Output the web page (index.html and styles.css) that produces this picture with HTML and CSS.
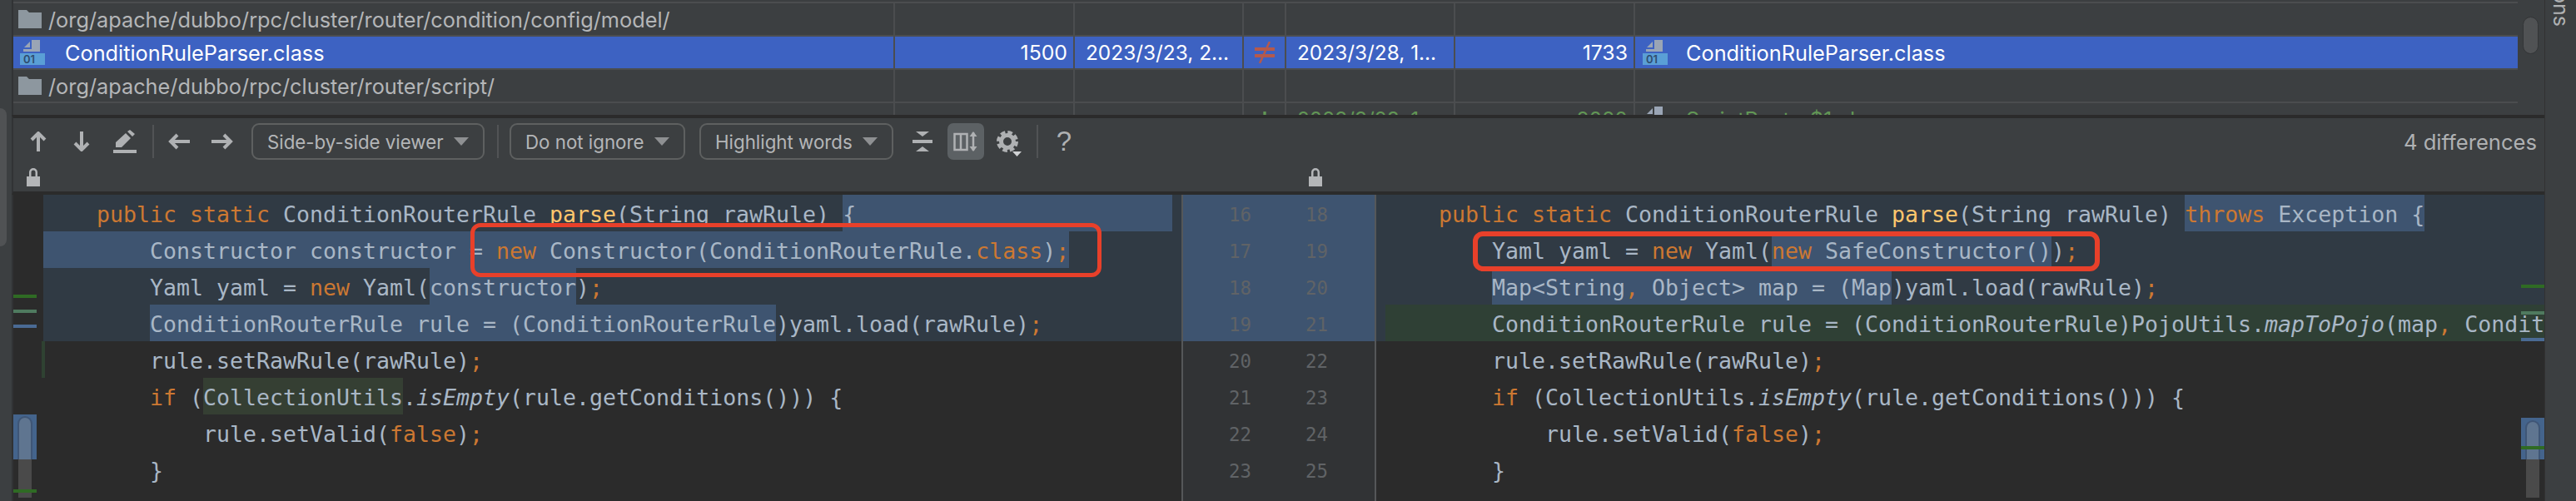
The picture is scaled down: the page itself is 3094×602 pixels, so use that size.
FILE: index.html
```html
<!DOCTYPE html>
<html lang="en">
<head>
<meta charset="utf-8">
<title>Diff</title>
<link rel="stylesheet" href="styles.css">
</head>
<body>
<div class="sidegrip"></div>
<div class="app">
  <div class="main">
    <div class="table">
      <div class="rows">
        <div class="tr sliver"></div>
        <div class="tr">
          <div class="td name"><svg class="ic-folder" viewBox="0 0 28 22"><path d="M0 0h10l3 3h15v19H0z"/></svg><span>/org/apache/dubbo/rpc/cluster/router/condition/config/model/</span></div>
          <div class="td"></div><div class="td"></div><div class="td"></div><div class="td"></div><div class="td"></div><div class="td"></div>
        </div>
        <div class="tr selected">
          <div class="td name file"><svg class="ic-cls" viewBox="0 0 30 30"><path class="page" d="M14 0h10v14H4v-3h10z"/><path class="page" d="M5 9l7-7v7z"/><rect class="badge" y="16" width="30" height="14"/><text class="bits" x="4" y="28">01</text></svg><span>ConditionRuleParser.class</span></div>
          <div class="td num">1500</div>
          <div class="td date">2023/3/23, 2...</div>
          <div class="td status"><svg class="ic-ne" viewBox="0 0 26 26"><path d="M1 7h24v4H1zM1 15h24v4H1z"/><path class="slash" d="M19 0L7 26"/></svg></div>
          <div class="td date">2023/3/28, 1...</div>
          <div class="td num">1733</div>
          <div class="td name file"><svg class="ic-cls" viewBox="0 0 30 30"><path class="page" d="M14 0h10v14H4v-3h10z"/><path class="page" d="M5 9l7-7v7z"/><rect class="badge" y="16" width="30" height="14"/><text class="bits" x="4" y="28">01</text></svg><span>ConditionRuleParser.class</span></div>
        </div>
        <div class="tr">
          <div class="td name"><svg class="ic-folder" viewBox="0 0 28 22"><path d="M0 0h10l3 3h15v19H0z"/></svg><span>/org/apache/dubbo/rpc/cluster/router/script/</span></div>
          <div class="td"></div><div class="td"></div><div class="td"></div><div class="td"></div><div class="td"></div><div class="td"></div>
        </div>
        <div class="tr added">
          <div class="td"></div><div class="td"></div><div class="td"></div>
          <div class="td status"><svg class="ic-plus" viewBox="0 0 20 20"><path d="M8.500 0h3v8.500H20v3h-8.500V20h-3v-8.500H0v-3h8.500z"/></svg></div>
          <div class="td date">2023/3/28, 1...</div>
          <div class="td num">2020</div>
          <div class="td name file"><svg class="ic-cls grey" viewBox="0 0 30 30"><path class="page" d="M14 0h10v14H4v-3h10z"/><path class="page" d="M5 9l7-7v7z"/></svg><span>ScriptRouter$1.class</span></div>
        </div>
      </div>
      <div class="vscroll"><div class="vthumb"></div></div>
    </div>

    <div class="toolbar">
      <div class="tools">
        <div class="tb"><svg class="ic" width="20" height="24" viewBox="0 0 20 24"><path d="M10 24V2M2 10l8-8 8 8"/></svg></div>
        <div class="tb"><svg class="ic" width="20" height="24" viewBox="0 0 20 24"><path d="M10 0v22M2 14l8 8 8-8"/></svg></div>
        <div class="tb"><svg class="ic-fill" width="30" height="28" viewBox="0 0 30 28"><path d="M4 21v-6L16 4l6 6-11 11zM18 2l3-2 6 5-3 3z"/><rect x="1" y="24" width="28" height="4"/></svg></div>
        <div class="sep first"></div>
        <div class="tb"><svg class="ic" width="26" height="20" viewBox="0 0 26 20"><path d="M26 10H3M11 2l-8 8 8 8"/></svg></div>
        <div class="tb"><svg class="ic" width="26" height="20" viewBox="0 0 26 20"><path d="M0 10h23M15 2l8 8-8 8"/></svg></div>
        <div class="dd viewer"><span>Side-by-side viewer</span><i class="tri"></i></div>
        <div class="sep second"></div>
        <div class="dd ignore"><span>Do not ignore</span><i class="tri"></i></div>
        <div class="dd words"><span>Highlight words</span><i class="tri"></i></div>
        <div class="btn collapse"><svg class="ic-fill" width="24" height="24" viewBox="0 0 24 24"><path d="M4 0h16l-8 6zM12 18l8 6H4z"/><rect y="10" width="24" height="4"/></svg></div>
        <div class="btn active"><svg class="ic-thin" width="30" height="28" viewBox="0 0 30 28"><path d="M1.500 5h15v19h-15zM9 5v19M24 3v22"/><path class="ic-head" d="M19.500 8L24 2l4.500 6zM19.500 20L24 26l4.500-6z"/></svg></div>
        <div class="btn gear"><svg class="ic-gear" width="30" height="32" viewBox="0 0 30 32"><circle class="ring" cx="13" cy="13" r="7.500"/><circle class="teeth" cx="13" cy="13" r="11"/><path class="caret" d="M19 25h11l-5.500 6z"/></svg></div>
        <div class="sep third"></div>
        <div class="btn help">?</div>
        <div class="count">4 differences</div>
      </div>
      <div class="locks">
        <svg class="lock" viewBox="0 0 16 22"><path d="M0 10h16v12H0zM3 10V5a5 5 0 0110 0v5h-2.500V5a2.500 2.500 0 00-5 0v5z"/></svg>
        <svg class="lock" viewBox="0 0 16 22"><path d="M0 10h16v12H0zM3 10V5a5 5 0 0110 0v5h-2.500V5a2.500 2.500 0 00-5 0v5z"/></svg>
      </div>
    </div>

    <div class="editor">
      <div class="pane left">
        <div class="line changed"><div class="code">    <b>public static</b> ConditionRouterRule <em>parse</em>(String rawRule) <span class="hl fill">{</span></div></div>
        <div class="line changed"><div class="code"><span class="hl">        Constructor constructor = <b>new</b> Constructor(ConditionRouterRule.<b>class</b>)<b>;</b></span></div></div>
        <div class="line changed"><div class="code">        Yaml yaml = <b>new</b> Yaml(<span class="hl">constructor</span>)<b>;</b></div></div>
        <div class="line changed"><div class="code">        <span class="hl">ConditionRouterRule rule = (ConditionRouterRule</span>)yaml.load(rawRule)<b>;</b></div></div>
        <div class="line"><div class="code">        rule.setRawRule(rawRule)<b>;</b></div></div>
        <div class="line"><div class="code">        <b>if</b> (<span class="usage">CollectionUtils</span>.<i>isEmpty</i>(rule.getConditions())) {</div></div>
        <div class="line"><div class="code">            rule.setValid(<b>false</b>)<b>;</b></div></div>
        <div class="line"><div class="code">        }</div></div>
        <div class="vbar"></div>
        <div class="mk green m1"></div><div class="mk sage m2"></div><div class="mk blue m3"></div>
        <div class="mk view m4"></div><div class="track t1"></div><div class="thumb t1"></div><div class="mk green m5"></div>
        <div class="callout c1"></div>
      </div>

      <div class="gutter">
        <div class="gl on"><span>16</span><span>18</span></div>
        <div class="gl on"><span>17</span><span>19</span></div>
        <div class="gl on"><span>18</span><span>20</span></div>
        <div class="gl on"><span>19</span><span>21</span></div>
        <div class="gl"><span>20</span><span>22</span></div>
        <div class="gl"><span>21</span><span>23</span></div>
        <div class="gl"><span>22</span><span>24</span></div>
        <div class="gl"><span>23</span><span>25</span></div>
      </div>

      <div class="pane right">
        <div class="line changed"><div class="code">    <b>public static</b> ConditionRouterRule <em>parse</em>(String rawRule) <span class="hl"><b>throws</b> Exception {</span></div></div>
        <div class="line changed"><div class="code">        Yaml yaml = <b>new</b> Yaml(<span class="hl"><b>new</b> SafeConstructor()</span>)<b>;</b></div></div>
        <div class="line changed"><div class="code">        <span class="hl">Map&lt;String<b>,</b> Object&gt; map = (Map</span>)yaml.load(rawRule)<b>;</b></div></div>
        <div class="line changed"><div class="code ins">        ConditionRouterRule rule = (ConditionRouterRule)PojoUtils.<i>mapToPojo</i>(map<b>,</b> ConditionRouterRule.<b>class</b>)<b>;</b></div></div>
        <div class="line"><div class="code">        rule.setRawRule(rawRule)<b>;</b></div></div>
        <div class="line"><div class="code">        <b>if</b> (CollectionUtils.<i>isEmpty</i>(rule.getConditions())) {</div></div>
        <div class="line"><div class="code">            rule.setValid(<b>false</b>)<b>;</b></div></div>
        <div class="line"><div class="code">        }</div></div>
        <div class="mk green n1"></div><div class="mk sage n2"></div><div class="mk blue n3"></div>
        <div class="mk view n4"></div><div class="track t2"></div><div class="thumb t2"></div><div class="mk green n5"></div>
        <div class="callout c2"></div>
      </div>
    </div>
  </div>
  <div class="strip"><div class="vtext"><span>ons</span></div></div>
</div>
</body>
</html>
```
FILE: styles.css
```css
* { box-sizing: border-box; }
html, body { margin: 0; padding: 0; width: 3094px; height: 602px; overflow: hidden; background: #3c3f41; }
.sidegrip { position: absolute; left: 0; top: 130px; width: 8px; height: 166px; background: #505254; border-radius: 0 8px 8px 0; }
.app { display: flex; width: 3094px; height: 602px; font-family: Inter, "Liberation Sans", sans-serif; }
.main { width: 3056px; height: 602px; padding-left: 14px; display: flex; flex-direction: column; }
.main > * { border-left: 2px solid #313335; }

/* file table */
.table { height: 138px; display: flex; overflow: hidden; flex: none; background: #3c3f41; }
.rows { width: 3008px; }
.tr { display: grid; grid-template-columns: 1057px 216px 203px 51px 203px 216px 1062px; height: 40px; border-bottom: 2px solid #4b4d4f; color: #b4b6b8; font-size: 25.300px; }
.tr.sliver { height: 4px; }
.td { display: flex; align-items: center; height: 38px; border-left: 2px solid #4b4d4f; white-space: nowrap; overflow: hidden; }
.td:first-child { border-left: 0; }
.name { padding-left: 6px; }
.name.file { padding-left: 8px; }
.td:last-child.name { padding-left: 9px; }
.ic-folder { width: 28px; height: 22px; margin-right: 8px; fill: #8d979f; flex: none; }
.ic-cls { width: 30px; height: 30px; margin-right: 24px; flex: none; }
.td:last-child .ic-cls { margin-right: 22px; }
.page { fill: #9aa5b5; }
.badge { fill: #5a9fd6; }
.bits { fill: #2f4d6e; font: 600 13px Inter, sans-serif; }
.num { justify-content: flex-end; padding-right: 7px; font-size: 24.800px; }
.date { padding-left: 13px; font-size: 24.400px; }
.status { justify-content: center; }
.ic-ne { width: 26px; height: 26px; fill: #b5594c; }
.slash { stroke: #b5594c; stroke-width: 2.500; fill: none; }
.ic-plus { width: 22px; height: 22px; margin-top: 4px; fill: #629755; }
.selected { color: #fff; background: #3d62c2; }
.added { color: #629755; }
.vscroll { width: 32px; position: relative; }
.vthumb { position: absolute; left: 6px; top: 20px; width: 19px; height: 45px; background: #505254; border: 1px solid #333537; border-radius: 10px; }

/* toolbar */
.toolbar { height: 96px; flex: none; border-top: 4px solid #2b2b2b; border-bottom: 4px solid #2b2b2b; color: #b4b6b8; position: relative; }
.tools { display: flex; align-items: stretch; height: 44px; margin-top: 6px; padding-left: 4px; }
.tb { width: 52px; display: flex; align-items: center; justify-content: center; }
.btn { width: 44px; display: flex; align-items: center; justify-content: center; border-radius: 7px; }
.ic { fill: none; stroke: #afb1b3; stroke-width: 4; }
.ic-fill { fill: #afb1b3; }
.ic-thin { fill: none; stroke: #afb1b3; stroke-width: 2.500; }
.ic-head { fill: #afb1b3; stroke: none; }
.ic-gear { margin-top: 6px; }
.ring { fill: none; stroke: #afb1b3; stroke-width: 5; }
.teeth { fill: none; stroke: #afb1b3; stroke-width: 4; stroke-dasharray: 5.640 3; }
.caret { fill: #d0d2d4; }
.sep { width: 2px; height: 40px; align-self: center; background: #515355; }
.sep.first { margin: 0 4px 0 7px; }
.sep.second { margin: 0 13px 0 15px; }
.sep.third { margin-left: 11px; }
.dd { display: flex; align-items: center; justify-content: space-between; padding: 0 17px; border: 2px solid #5e6060; border-radius: 9px; font-size: 22.300px; white-space: nowrap; }
.viewer { width: 280px; margin-left: 9px; }
.ignore { width: 211px; }
.words { width: 233px; margin-left: 17px; }
.tri { width: 0; height: 0; border-left: 9px solid transparent; border-right: 9px solid transparent; border-top: 10px solid #8e9092; }
.collapse { margin-left: 13px; }
.active { margin-left: 8px; background: #5c6164; }
.gear { margin-left: 8px; }
.help { margin-left: 9px; font: 33px "Liberation Sans", sans-serif; color: #afb1b3; }
.count { margin-left: auto; padding-right: 9px; align-self: center; font-size: 25.600px; color: #afb1b3; }
.locks { display: flex; margin-top: 10px; padding-left: 16px; }
.lock { width: 16px; height: 22px; fill: #b4b6b8; }
.lock + .lock { margin-left: 1524px; }

/* editor */
.editor { flex: 1; display: flex; min-height: 0; background: #2b2b2b; font-family: "DejaVu Sans Mono", "Liberation Mono", monospace; font-size: 26.580px; color: #a9b7c6; }
.pane { position: relative; overflow: hidden; background: #2b2b2b; flex: none; height: 364px; }
.pane.left { width: 1403px; padding-left: 36px; }
.pane.right { width: 1403px; }
.pane.right .line { padding-left: 11px; }
.line { height: 44px; display: flex; }
.line.changed { background: #303a44; }
.code { flex: 1; height: 44px; line-height: 47px; white-space: pre; overflow: hidden; }
.code b { font-weight: normal; color: #cc7832; }
.code em { font-style: normal; color: #ffc66d; }
.code i { font-style: italic; }
.hl { display: inline-block; height: 44px; vertical-align: top; background: #3e5470; }
.hl.fill { width: 396px; }
.usage { display: inline-block; height: 44px; vertical-align: top; background: #353f33; }
.ins { background: #2f4035; }

.gutter { width: 234px; flex: none; border-left: 2px solid #555759; border-right: 2px solid #555759; background: #313335; color: #606366; font-size: 22.400px; }
.gl { height: 44px; line-height: 48px; display: grid; grid-template-columns: 92px auto; padding-left: 55px; overflow: hidden; }
.gl.on { background: #3e5470; }

.mk, .track, .thumb, .vbar, .callout { position: absolute; }
.mk { width: 28px; height: 4px; }
.left .mk { left: 0; }
.right .mk { right: 0; }
.green { background: #2f6b24; }
.sage { background: #4f7a5f; }
.blue { background: #4a6a94; }
.view { background: #44648c; }
.m1 { top: 120px; } .m2 { top: 138px; } .m3 { top: 156px; }
.m4 { top: 264px; height: 54px; } .m5 { top: 354px; }
.n1 { top: 108px; } .n2 { top: 140px; } .n3 { top: 172px; }
.n4 { top: 268px; height: 50px; } .n5 { top: 302px; z-index: 1; }
.track { top: 318px; width: 16px; height: 50px; background: #4a4a4a; }
.thumb { width: 18px; background: #5f7590; border: 2px solid #3f5676; border-bottom: 0; border-radius: 9px 9px 0 0; }
.track.t1 { left: 6px; }
.thumb.t1 { left: 5px; top: 266px; height: 52px; }
.track.t2 { right: 6px; }
.thumb.t2 { right: 5px; top: 271px; height: 47px; }
.vbar { left: 34px; top: 176px; width: 4px; height: 44px; background: #2f4232; }
.callout { border: 6px solid #e8402a; border-radius: 12px; }
.c1 { left: 549px; top: 34px; width: 758px; height: 65px; border-width: 5px; }
.c2 { left: 116px; top: 44px; width: 753px; height: 48px; }

/* right strip */
.strip { width: 38px; height: 602px; border-left: 1px solid #323232; background: #3c3f41; color: #afb1b3; overflow: hidden; }
.vtext { height: 31px; display: flex; justify-content: center; font-size: 25px; }
.vtext span { writing-mode: vertical-rl; height: 42px; margin-top: -11px; line-height: 1; }
```
